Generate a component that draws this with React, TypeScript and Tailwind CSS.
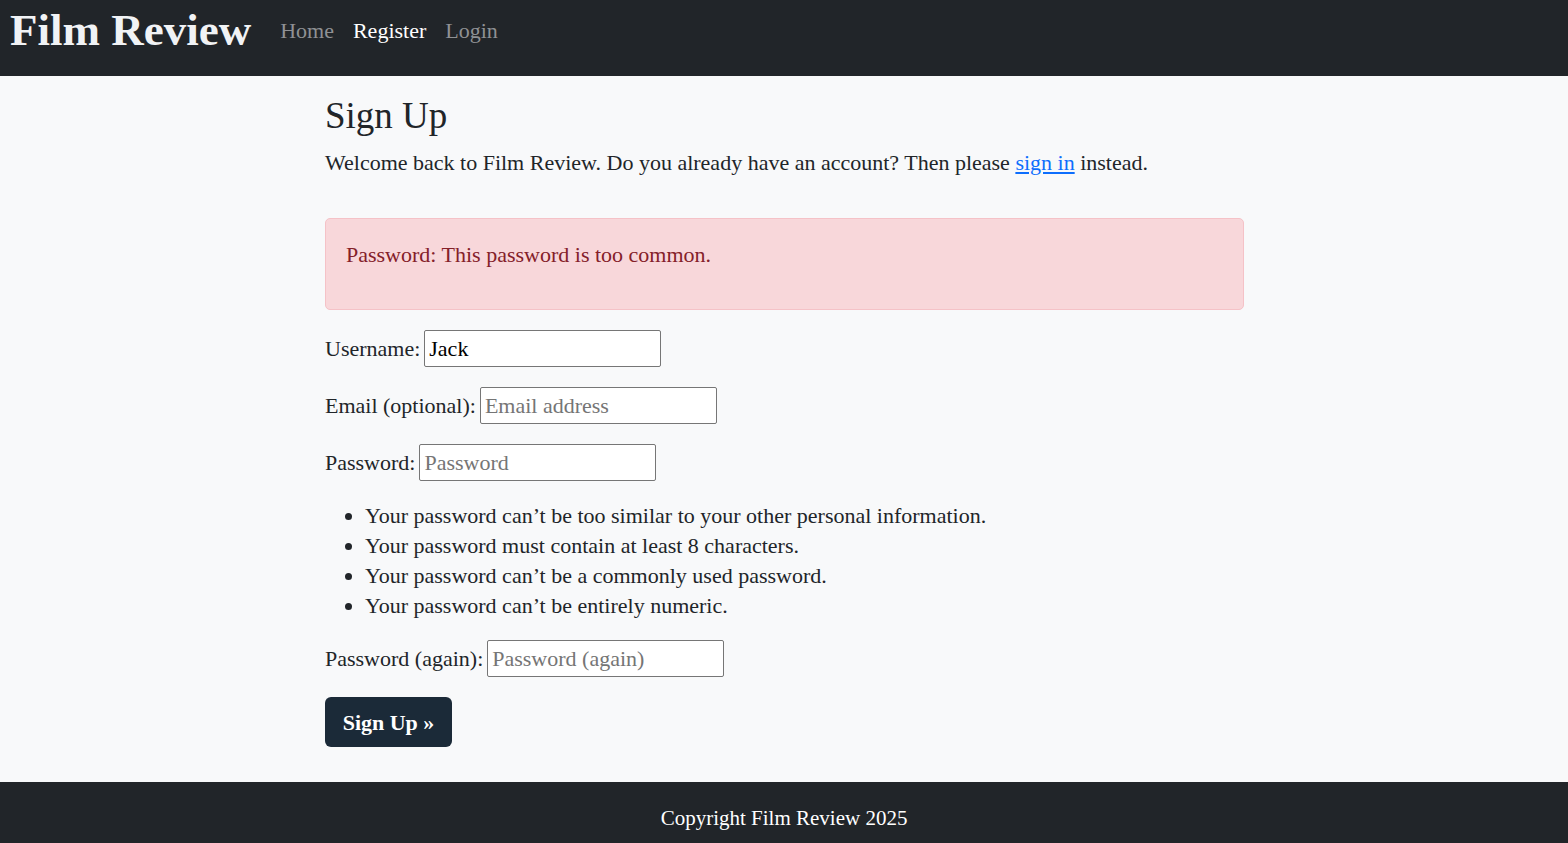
import React from "react";

const serif = { fontFamily: '"Liberation Serif", "DejaVu Serif", serif' };

function Row({ label, placeholder, value }: { label: string; placeholder?: string; value?: string }) {
  return (
    <div className="flex items-center h-[37px]">
      <span className="text-[22px] text-[#212529] mr-[4px]">{label}</span>
      <input
        className="w-[237px] h-[37px] border border-[#767676] rounded-[2px] bg-white px-[4px] text-[22px] text-black placeholder:text-[#757575] outline-none"
        style={serif}
        placeholder={placeholder}
        defaultValue={value}
      />
    </div>
  );
}

export default function App() {
  return (
    <div className="min-h-[843px] flex flex-col bg-[#f8f9fa]" style={serif}>
      <nav className="h-[76px] bg-[#212529] flex items-center pl-[10px] shrink-0">
        <span className="text-[45px] font-bold text-[#f1f3f5] leading-none mr-[29px] -mt-[16px]">Film Review</span>
        <div className="flex gap-[19px] text-[22px] -mt-[16px]">
          <span className="text-[#8f9194]">Home</span>
          <span className="text-white">Register</span>
          <span className="text-[#8f9194]">Login</span>
        </div>
      </nav>
      <main className="flex-1">
        <div className="w-[920px] mx-auto pt-[16px] pb-[35px] pl-[1px]">
          <h1 className="text-[37px] leading-[48px] text-[#212529] mb-[8px]">Sign Up</h1>
          <p className="text-[22px] leading-[30px] text-[#212529]">
            Welcome back to Film Review. Do you already have an account? Then please{" "}
            <a href="#" className="text-[#0d6efd] underline">sign in</a> instead.
          </p>
          <div className="mt-[40px] h-[92px] bg-[#f8d7da] border border-[#f5c2c7] rounded-[5px] px-[20px] pt-[21px] text-[#842029] text-[22px] leading-[30px]">
            Password: This password is too common.
          </div>
          <div className="mt-[20px] flex flex-col gap-[20px]">
            <Row label="Username:" value="Jack" />
            <Row label="Email (optional):" placeholder="Email address" />
            <Row label="Password:" placeholder="Password" />
          </div>
          <ul className="mt-[20px] list-disc pl-[40px] text-[22px] leading-[30px] text-[#212529]">
            <li>Your password can’t be too similar to your other personal information.</li>
            <li>Your password must contain at least 8 characters.</li>
            <li>Your password can’t be a commonly used password.</li>
            <li>Your password can’t be entirely numeric.</li>
          </ul>
          <div className="mt-[19px]">
            <Row label="Password (again):" placeholder="Password (again)" />
          </div>
          <button className="mt-[20px] w-[127px] h-[50px] bg-[#1b2a38] rounded-[6px] text-white font-bold text-[22px]" style={serif}>
            Sign Up »
          </button>
        </div>
      </main>
      <footer className="h-[61px] bg-[#212529] flex justify-center pt-[22px] text-white text-[21px] leading-[28px] shrink-0">
        Copyright Film Review 2025
      </footer>
    </div>
  );
}
